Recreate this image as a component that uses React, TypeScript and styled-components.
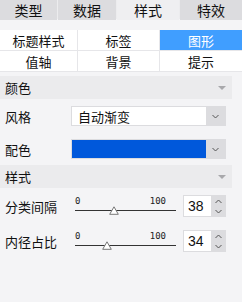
import React from "react";
import styled, { createGlobalStyle } from "styled-components";

const GlobalStyle = createGlobalStyle`
    html, body {
        margin: 0;
        padding: 0;
        background: #f4f4f6;
    }
    body {
        font-family: "Noto Sans CJK SC", "Liberation Sans", sans-serif;
        color: #111;
    }
`;

const Panel = styled.div`
    width: 242px;
    height: 302px;
    background: #f4f4f6;
    overflow: hidden;
`;

const TabBar = styled.div`
    display: grid;
    grid-template-columns: 57px 58px 62px 62px;
    column-gap: 1px;
    background: #ececee;
    height: 19px;
`;

const Tab = styled.div<{ $active?: boolean }>`
    display: flex;
    align-items: center;
    justify-content: center;
    font-size: 14px;
    background: ${(p) => (p.$active ? "#efeff1" : "#dcdcdf")};
    color: #111;
`;

const SubTabs = styled.div`
    margin-top: 11px;
    display: grid;
    grid-template-columns: 77px 81px 82px;
    grid-auto-rows: 20px;
    gap: 1px;
    background: #e6e6e9;
    border-bottom: 1px solid #e6e6e9;
`;

const SubTab = styled.div<{ $active?: boolean }>`
    display: flex;
    align-items: center;
    justify-content: center;
    font-size: 13px;
    background: ${(p) => (p.$active ? "#409eff" : "#ffffff")};
    color: ${(p) => (p.$active ? "#ffffff" : "#111")};
`;

const SectionHeader = styled.div<{ $gap: number }>`
    margin-top: ${(p) => p.$gap}px;
    width: 232px;
    height: 23px;
    box-sizing: border-box;
    padding: 0 6px 0 5px;
    display: flex;
    align-items: center;
    justify-content: space-between;
    background: #ebebed;
    font-size: 13px;
`;

const Caret = styled.span`
    width: 0;
    height: 0;
    border-left: 4px solid transparent;
    border-right: 4px solid transparent;
    border-top: 4px solid #a8a8ab;
`;

const Row = styled.div<{ $h: number }>`
    display: flex;
    align-items: center;
    height: ${(p) => p.$h}px;
    padding-left: 5px;
    width: 226px;
    box-sizing: border-box;
`;

const Label = styled.span`
    width: 66px;
    font-size: 13px;
    flex-shrink: 0;
`;

const SelectBox = styled.div`
    flex: 1;
    display: flex;
    height: 20px;
    box-sizing: border-box;
    border: 1px solid #dcdcdf;
    background: #fff;
`;

const SelectValue = styled.div<{ $swatch?: string }>`
    flex: 1;
    display: flex;
    align-items: center;
    padding-left: 6px;
    font-size: 13px;
    background: ${(p) => p.$swatch || "#fff"};
`;

const DropButton = styled.div`
    width: 19px;
    background: #dcdcdf;
    display: flex;
    align-items: center;
    justify-content: center;
`;

const SliderWrap = styled.div`
    position: relative;
    width: 101px;
    margin-left: 4px;
    height: 22px;
`;

const SliderLabels = styled.div`
    display: flex;
    justify-content: space-between;
    padding: 1px 10px 0 0;
    font-family: "DejaVu Sans Mono", "Liberation Mono", monospace;
    font-size: 9px;
    line-height: 10px;
    color: #222;
`;

const Track = styled.div`
    margin-top: 4px;
    height: 1px;
    background: #333;
`;

const Thumb = styled.svg`
    position: absolute;
    top: 11px;
`;

const NumberBox = styled.div`
    margin-left: 7px;
    display: flex;
    height: 22px;
    width: 43px;
    box-sizing: border-box;
    border: 1px solid #dcdcdf;
    background: #fff;
`;

const NumberValue = styled.div`
    flex: 1;
    display: flex;
    align-items: center;
    padding-left: 4px;
    font-family: "Liberation Sans", sans-serif;
    font-size: 14px;
`;

const Spinner = styled.div`
    width: 14px;
    background: #dcdcdf;
    display: flex;
    flex-direction: column;
    align-items: center;
    justify-content: space-around;
`;

const Chevron: React.FC<{ up?: boolean }> = ({ up }) => (
    <svg width="7" height="5" viewBox="0 0 7 5">
        <path
            d={up ? "M0.5 4 L3.5 1 L6.5 4" : "M0.5 1 L3.5 4 L6.5 1"}
            fill="none"
            stroke="#555"
            strokeWidth="1"
        />
    </svg>
);

const Slider: React.FC<{ value: number }> = ({ value }) => {
    // thumb centre in px from the track start, as measured on the widget
    const centre = 38.7 + (value - 38) * 1.6;
    return (
        <SliderWrap>
            <SliderLabels>
                <span>0</span>
                <span>100</span>
            </SliderLabels>
            <Track />
            <Thumb width="10" height="9" viewBox="0 0 10 9" style={{ left: centre - 5 }}>
                <path d="M5 0.8 L9.3 8.3 L0.7 8.3 Z" fill="#fff" stroke="#777" strokeWidth="1" />
            </Thumb>
        </SliderWrap>
    );
};

const NumberInput: React.FC<{ value: number }> = ({ value }) => (
    <NumberBox>
        <NumberValue>{value}</NumberValue>
        <Spinner>
            <Chevron up />
            <Chevron />
        </Spinner>
    </NumberBox>
);

const tabs = ["类型", "数据", "样式", "特效"];
const subTabs = ["标题样式", "标签", "图形", "值轴", "背景", "提示"];

export default function App() {
    return (
        <Panel>
            <GlobalStyle />
            <TabBar>
                {tabs.map((t) => (
                    <Tab key={t} $active={t === "样式"}>
                        {t}
                    </Tab>
                ))}
            </TabBar>
            <SubTabs>
                {subTabs.map((t) => (
                    <SubTab key={t} $active={t === "图形"}>
                        {t}
                    </SubTab>
                ))}
            </SubTabs>
            <SectionHeader $gap={4}>
                颜色
                <Caret />
            </SectionHeader>
            <Row $h={34}>
                <Label>风格</Label>
                <SelectBox>
                    <SelectValue>自动渐变</SelectValue>
                    <DropButton>
                        <Chevron />
                    </DropButton>
                </SelectBox>
            </Row>
            <Row $h={32}>
                <Label>配色</Label>
                <SelectBox>
                    <SelectValue $swatch="#0058db" />
                    <DropButton>
                        <Chevron />
                    </DropButton>
                </SelectBox>
            </Row>
            <SectionHeader $gap={0}>
                样式
                <Caret />
            </SectionHeader>
            <Row $h={36}>
                <Label>分类间隔</Label>
                <Slider value={38} />
                <NumberInput value={38} />
            </Row>
            <Row $h={34}>
                <Label>内径占比</Label>
                <Slider value={34} />
                <NumberInput value={34} />
            </Row>
        </Panel>
    );
}
